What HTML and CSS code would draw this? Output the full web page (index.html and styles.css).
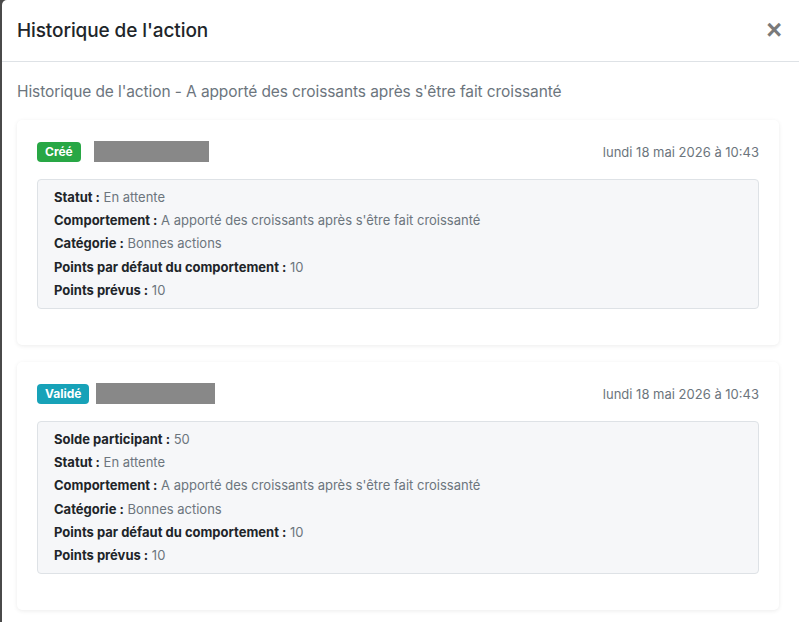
FILE: index.html
```html
<!DOCTYPE html>
<html lang="fr">
<head>
  <meta charset="UTF-8" />
  <meta name="viewport" content="width=device-width, initial-scale=1.0"/>
  <title>Historique de l'action</title>
  <link rel="stylesheet" href="styles.css">
</head>
<body>

  <!-- fenêtre modale -->
  <div class="modal">
    <div class="modal-header">
      <h5 class="modal-title">Historique de l'action</h5>
      <button class="close" type="button">&times;</button>
    </div>

    <div class="modal-body">
      <p class="subtitle">Historique de l'action - A apporté des croissants après s'être fait croissanté</p>

      <!-- entrée : création -->
      <div class="card">
        <div class="card-head">
          <div class="who">
            <span class="badge badge-success">Créé</span>
            <span class="hidden-name name-1"></span>
          </div>
          <span class="date">lundi 18 mai 2026 à 10:43</span>
        </div>
        <div class="details">
          <p><b>Statut :</b> En attente</p>
          <p><b>Comportement :</b> A apporté des croissants après s'être fait croissanté</p>
          <p><b>Catégorie :</b> Bonnes actions</p>
          <p><b>Points par défaut du comportement :</b> 10</p>
          <p><b>Points prévus :</b> 10</p>
        </div>
      </div>

      <!-- entrée : validation -->
      <div class="card">
        <div class="card-head">
          <div class="who">
            <span class="badge badge-info">Validé</span>
            <span class="hidden-name name-2"></span>
          </div>
          <span class="date">lundi 18 mai 2026 à 10:43</span>
        </div>
        <div class="details">
          <p><b>Solde participant :</b> 50</p>
          <p><b>Statut :</b> En attente</p>
          <p><b>Comportement :</b> A apporté des croissants après s'être fait croissanté</p>
          <p><b>Catégorie :</b> Bonnes actions</p>
          <p><b>Points par défaut du comportement :</b> 10</p>
          <p><b>Points prévus :</b> 10</p>
        </div>
      </div>
    </div>
  </div>

</body>
</html>
```

FILE: styles.css
```css
body {
  margin: 0;
  padding: 0;
  font-family: Inter, "Noto Sans", sans-serif;
  background: #4a4a4a;
  height: 622px;
  overflow: hidden;
}

.modal {
  margin-left: 2px;
  background: #fff;
  border-top-left-radius: 5px;
  height: 100%;
  color: #212529;
}

.modal-header {
  display: flex;
  justify-content: space-between;
  align-items: center;
  height: 62px;
  padding: 0 15px;
  border-bottom: 1px solid #dee2e6;
  box-sizing: border-box;
}

.modal-title {
  margin: 0;
  font-size: 19px;
  font-weight: 500;
  letter-spacing: -0.1px;
}

.close {
  background: none;
  border: none;
  padding: 0;
  font-size: 27px;
  font-weight: 700;
  line-height: 1;
  color: #7a7a7a;
  cursor: pointer;
  margin-right: 2px;
}

.modal-body {
  padding: 17px 20px 16px 15px;
}

.subtitle {
  margin: 3px 0 19px;
  font-size: 15.5px;
  color: #6c757d;
  letter-spacing: -0.1px;
}

.card {
  background: #fff;
  border-radius: 5px;
  box-shadow: 0 1px 4px rgba(0, 0, 0, 0.08);
  padding: 21px 20px 36px;
  margin-bottom: 17px;
}

.card-head {
  display: flex;
  justify-content: space-between;
  align-items: center;
  margin-bottom: 17px;
}

.who {
  display: flex;
  align-items: center;
  gap: 13px;
}

.badge {
  display: inline-block;
  font-size: 12px;
  font-weight: 700;
  color: #fff;
  padding: 3px 8px;
  border-radius: 4px;
  line-height: 14px;
}

.badge-success {
  background: #28a745;
}

.badge-info {
  background: #17a2b8;
}

.hidden-name {
  display: inline-block;
  height: 21px;
  background: #888;
}

.name-1 {
  width: 115px;
}

.name-2 {
  width: 119px;
  margin-left: -6px;
}

.date {
  font-size: 13px;
  color: #6c757d;
}

.details {
  background: #f6f7f9;
  border: 1px solid #dee2e6;
  border-radius: 4px;
  padding: 6px 16px 6px;
}

.details p {
  margin: 0;
  font-size: 13px;
  line-height: 23.2px;
  color: #6c757d;
}

.details b {
  color: #212529;
  font-weight: 700;
}
```
